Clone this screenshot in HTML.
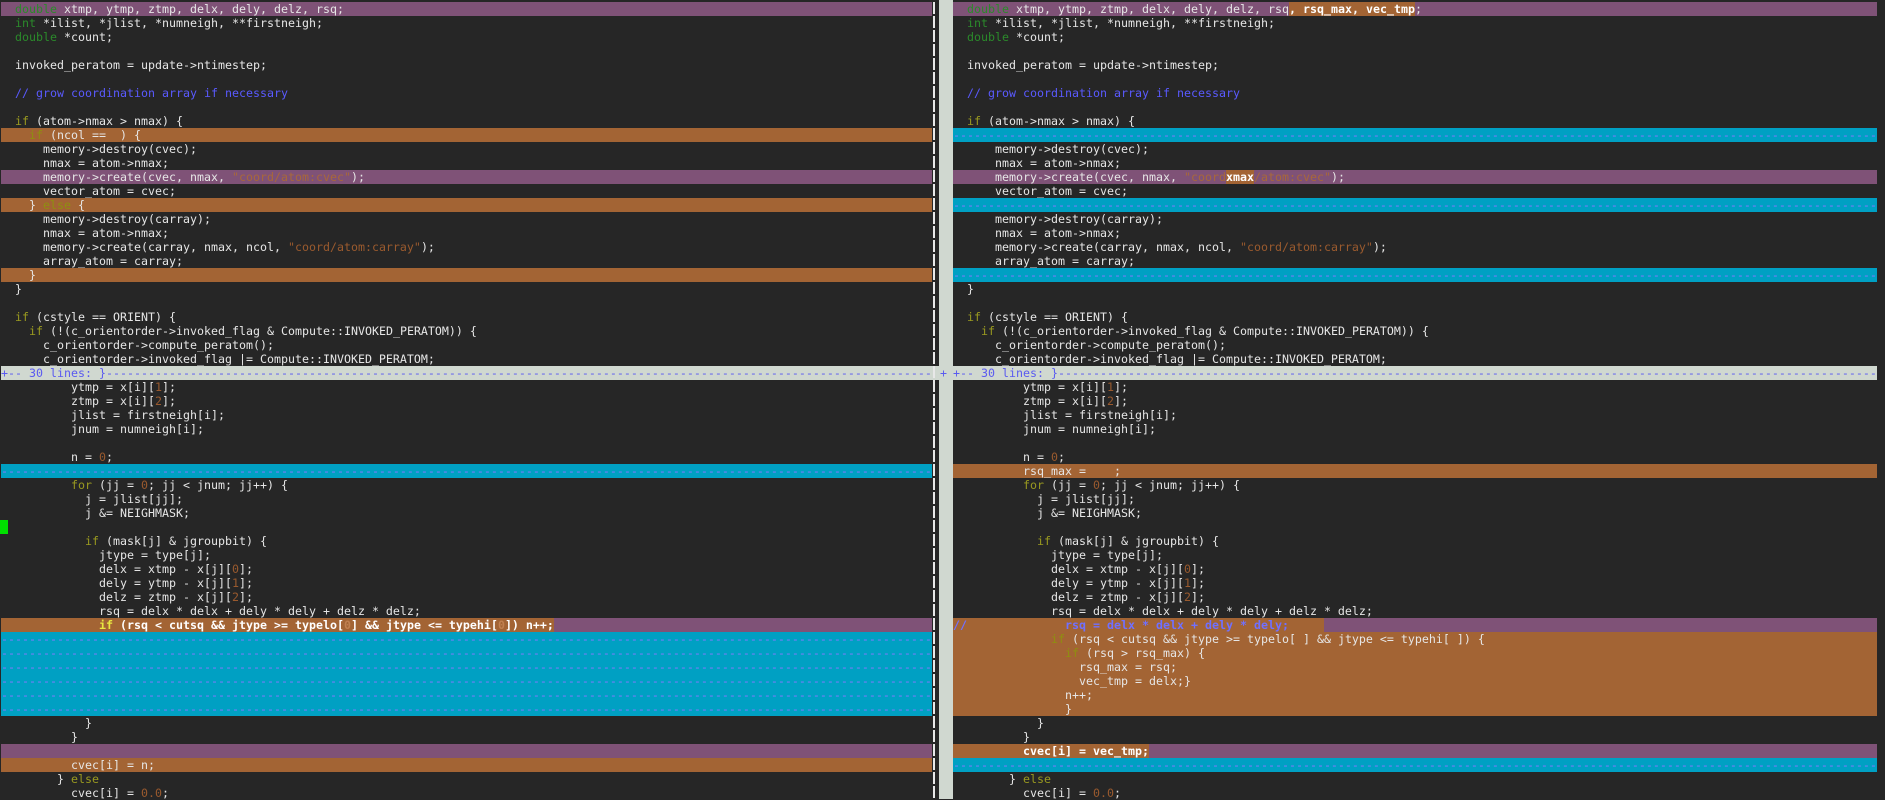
<!DOCTYPE html>
<html><head><meta charset="utf-8">
<style>
html,body{margin:0;padding:0;background:#262626;}
body{width:1885px;height:799px;position:relative;overflow:hidden;font-family:"DejaVu Sans Mono","Liberation Mono",monospace;font-size:11.63px;color:#e6e6e6;}
.pane{position:absolute;top:2px;}
#L{left:1px;width:931px;}
#R{left:953px;width:924px;}
.r{height:14px;line-height:14px;white-space:pre;overflow:hidden;}
.p{background:#7f5277;}
.o{background:#a36434;}
.f{background:#00a0c3;color:#8878ff;}
.fold{background:#d0d8d0;color:#5a5af0;}
.t{color:#2b8a2b;}
.k{color:#9a9a20;}
.o .k{color:#8f8f10;}
.c{color:#5a5aff;}
.n{color:#9a5a2e;}
.p .n{color:#a8683a;}
.o .n{color:#b87848;}
.x{background:#a36434;font-weight:bold;color:#fff;}
.x .k{color:#e8e840;}
.x .c{color:#7070ff;}
.x .n{color:#c08050;}
#sep{position:absolute;left:933px;top:0;width:2px;height:799px;background:repeating-linear-gradient(to bottom,transparent 0,transparent 2px,#e8e8e8 2px,#e8e8e8 14px);}
#fc{position:absolute;left:939px;top:0;width:14px;height:799px;background:#d0d8d0;}
#foldbar{position:absolute;left:1px;top:366px;width:1876px;height:14px;background:#d0d8d0;}
#cur{position:absolute;left:0;top:520px;width:8px;height:14px;background:#00e000;}
</style></head><body>
<div id="foldbar"></div>
<div id="sep"></div>
<div id="fc"></div>
<div style="position:absolute;left:940px;top:366px;height:14px;line-height:14px;color:#5a5af0;">+</div>
<div id="cur"></div>

<div class="pane" id="L">
<div class="r p">  <span class="t">double</span> xtmp, ytmp, ztmp, delx, dely, delz, rsq;</div>
<div class="r">  <span class="t">int</span> *ilist, *jlist, *numneigh, **firstneigh;</div>
<div class="r">  <span class="t">double</span> *count;</div>
<div class="r"> </div>
<div class="r">  invoked_peratom = update-&gt;ntimestep;</div>
<div class="r"> </div>
<div class="r">  <span class="c">// grow coordination array if necessary</span></div>
<div class="r"> </div>
<div class="r">  <span class="k">if</span> (atom-&gt;nmax &gt; nmax) {</div>
<div class="r o">    <span class="k">if</span> (ncol ==  ) {</div>
<div class="r">      memory-&gt;destroy(cvec);</div>
<div class="r">      nmax = atom-&gt;nmax;</div>
<div class="r p">      memory-&gt;create(cvec, nmax, <span class="n">"coord/atom:cvec"</span>);</div>
<div class="r">      vector_atom = cvec;</div>
<div class="r o">    } <span class="k">else</span> {</div>
<div class="r">      memory-&gt;destroy(carray);</div>
<div class="r">      nmax = atom-&gt;nmax;</div>
<div class="r">      memory-&gt;create(carray, nmax, ncol, <span class="n">"coord/atom:carray"</span>);</div>
<div class="r">      array_atom = carray;</div>
<div class="r o">    }</div>
<div class="r">  }</div>
<div class="r"> </div>
<div class="r">  <span class="k">if</span> (cstyle == ORIENT) {</div>
<div class="r">    <span class="k">if</span> (!(c_orientorder-&gt;invoked_flag &amp; Compute::INVOKED_PERATOM)) {</div>
<div class="r">      c_orientorder-&gt;compute_peratom();</div>
<div class="r">      c_orientorder-&gt;invoked_flag |= Compute::INVOKED_PERATOM;</div>
<div class="r fold">+-- 30 lines: }-----------------------------------------------------------------------------------------------------------------------------------</div>
<div class="r">          ytmp = x[i][<span class="n">1</span>];</div>
<div class="r">          ztmp = x[i][<span class="n">2</span>];</div>
<div class="r">          jlist = firstneigh[i];</div>
<div class="r">          jnum = numneigh[i];</div>
<div class="r"> </div>
<div class="r">          n = <span class="n">0</span>;</div>
<div class="r f">--------------------------------------------------------------------------------------------------------------------------------------------</div>
<div class="r">          <span class="k">for</span> (jj = <span class="n">0</span>; jj &lt; jnum; jj++) {</div>
<div class="r">            j = jlist[jj];</div>
<div class="r">            j &amp;= NEIGHMASK;</div>
<div class="r"> </div>
<div class="r">            <span class="k">if</span> (mask[j] &amp; jgroupbit) {</div>
<div class="r">              jtype = type[j];</div>
<div class="r">              delx = xtmp - x[j][<span class="n">0</span>];</div>
<div class="r">              dely = ytmp - x[j][<span class="n">1</span>];</div>
<div class="r">              delz = ztmp - x[j][<span class="n">2</span>];</div>
<div class="r">              rsq = delx * delx + dely * dely + delz * delz;</div>
<div class="r p"><span class="x">              <span class="k">if</span> (rsq &lt; cutsq &amp;&amp; jtype &gt;= typelo[<span class="n">0</span>] &amp;&amp; jtype &lt;= typehi[<span class="n">0</span>]) n++;</span></div>
<div class="r f">--------------------------------------------------------------------------------------------------------------------------------------------</div>
<div class="r f">--------------------------------------------------------------------------------------------------------------------------------------------</div>
<div class="r f">--------------------------------------------------------------------------------------------------------------------------------------------</div>
<div class="r f">--------------------------------------------------------------------------------------------------------------------------------------------</div>
<div class="r f">--------------------------------------------------------------------------------------------------------------------------------------------</div>
<div class="r f">--------------------------------------------------------------------------------------------------------------------------------------------</div>
<div class="r">            }</div>
<div class="r">          }</div>
<div class="r p"> </div>
<div class="r o">          cvec[i] = n;</div>
<div class="r">        } <span class="k">else</span></div>
<div class="r">          cvec[i] = <span class="n">0.0</span>;</div>
</div>

<div class="pane" id="R">
<div class="r p">  <span class="t">double</span> xtmp, ytmp, ztmp, delx, dely, delz, rsq<span class="x">, rsq_max, vec_tmp</span>;</div>
<div class="r">  <span class="t">int</span> *ilist, *jlist, *numneigh, **firstneigh;</div>
<div class="r">  <span class="t">double</span> *count;</div>
<div class="r"> </div>
<div class="r">  invoked_peratom = update-&gt;ntimestep;</div>
<div class="r"> </div>
<div class="r">  <span class="c">// grow coordination array if necessary</span></div>
<div class="r"> </div>
<div class="r">  <span class="k">if</span> (atom-&gt;nmax &gt; nmax) {</div>
<div class="r f">--------------------------------------------------------------------------------------------------------------------------------------------</div>
<div class="r">      memory-&gt;destroy(cvec);</div>
<div class="r">      nmax = atom-&gt;nmax;</div>
<div class="r p">      memory-&gt;create(cvec, nmax, <span class="n">"coord</span><span class="x">xmax</span><span class="n">/atom:cvec"</span>);</div>
<div class="r">      vector_atom = cvec;</div>
<div class="r f">--------------------------------------------------------------------------------------------------------------------------------------------</div>
<div class="r">      memory-&gt;destroy(carray);</div>
<div class="r">      nmax = atom-&gt;nmax;</div>
<div class="r">      memory-&gt;create(carray, nmax, ncol, <span class="n">"coord/atom:carray"</span>);</div>
<div class="r">      array_atom = carray;</div>
<div class="r f">--------------------------------------------------------------------------------------------------------------------------------------------</div>
<div class="r">  }</div>
<div class="r"> </div>
<div class="r">  <span class="k">if</span> (cstyle == ORIENT) {</div>
<div class="r">    <span class="k">if</span> (!(c_orientorder-&gt;invoked_flag &amp; Compute::INVOKED_PERATOM)) {</div>
<div class="r">      c_orientorder-&gt;compute_peratom();</div>
<div class="r">      c_orientorder-&gt;invoked_flag |= Compute::INVOKED_PERATOM;</div>
<div class="r fold">+-- 30 lines: }-----------------------------------------------------------------------------------------------------------------------------------</div>
<div class="r">          ytmp = x[i][<span class="n">1</span>];</div>
<div class="r">          ztmp = x[i][<span class="n">2</span>];</div>
<div class="r">          jlist = firstneigh[i];</div>
<div class="r">          jnum = numneigh[i];</div>
<div class="r"> </div>
<div class="r">          n = <span class="n">0</span>;</div>
<div class="r o">          rsq_max =    ;</div>
<div class="r">          <span class="k">for</span> (jj = <span class="n">0</span>; jj &lt; jnum; jj++) {</div>
<div class="r">            j = jlist[jj];</div>
<div class="r">            j &amp;= NEIGHMASK;</div>
<div class="r"> </div>
<div class="r">            <span class="k">if</span> (mask[j] &amp; jgroupbit) {</div>
<div class="r">              jtype = type[j];</div>
<div class="r">              delx = xtmp - x[j][<span class="n">0</span>];</div>
<div class="r">              dely = ytmp - x[j][<span class="n">1</span>];</div>
<div class="r">              delz = ztmp - x[j][<span class="n">2</span>];</div>
<div class="r">              rsq = delx * delx + dely * dely + delz * delz;</div>
<div class="r p"><span class="x"><span class="c">//              rsq = delx * delx + dely * dely;     </span></span></div>
<div class="r o">              <span class="k">if</span> (rsq &lt; cutsq &amp;&amp; jtype &gt;= typelo[ ] &amp;&amp; jtype &lt;= typehi[ ]) {</div>
<div class="r o">                <span class="k">if</span> (rsq &gt; rsq_max) {</div>
<div class="r o">                  rsq_max = rsq;</div>
<div class="r o">                  vec_tmp = delx;}</div>
<div class="r o">                n++;</div>
<div class="r o">                }</div>
<div class="r">            }</div>
<div class="r">          }</div>
<div class="r p"><span class="x">          cvec[i] = vec_tmp;</span></div>
<div class="r f">--------------------------------------------------------------------------------------------------------------------------------------------</div>
<div class="r">        } <span class="k">else</span></div>
<div class="r">          cvec[i] = <span class="n">0.0</span>;</div>
</div>
</body></html>
